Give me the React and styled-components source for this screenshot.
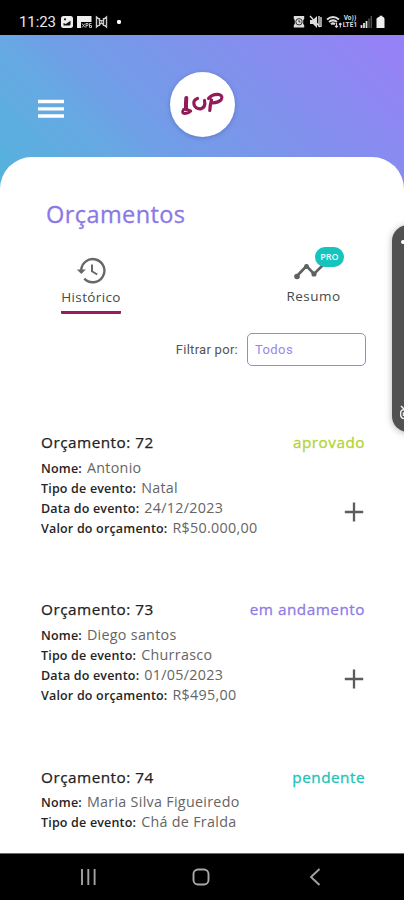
import React from 'react';
import styled, { createGlobalStyle } from 'styled-components';

const Global = createGlobalStyle`
  * { box-sizing: border-box; }
  body { margin: 0; background: #000; }
`;

const Screen = styled.div`
  position: relative;
  width: 404px;
  height: 900px;
  overflow: hidden;
  display: flex;
  flex-direction: column;
  background: #000;
  font-family: 'Open Sans', sans-serif;
`;

const StatusBar = styled.div`
  height: 35px;
  flex: none;
  display: flex;
  align-items: center;
  justify-content: space-between;
  padding: 8px 18px 0 19px;
  color: #e8e8e8;
`;

const Clock = styled.span`
  font: 400 15px/18px Roboto, sans-serif;
  width: 37px;
  margin-right: 4px;
  letter-spacing: -0.1px;
  white-space: nowrap;
`;

const StatusGroup = styled.div`
  display: flex;
  align-items: center;
  svg { display: block; flex: none; }
`;

const Body = styled.div`
  flex: none;
  height: 818px;
  display: flex;
  flex-direction: column;
  background: linear-gradient(45deg, #50b5da 0, #68a8e4 124px, #709ee7 160px, #8091ec 262px, #9880f8 409px);
  background-size: 404px 175px;
  background-repeat: no-repeat;
`;

const Header = styled.header`
  height: 122px;
  flex: none;
  display: grid;
  grid-template-columns: 1fr 66px 1fr;
  align-items: center;
  padding: 17px 0 0 38px;
`;

const MenuButton = styled.button`
  border: 0;
  background: none;
  padding: 8px 0 0;
  width: 26px;
  svg { display: block; }
`;

const Logo = styled.div`
  width: 65px;
  height: 65px;
  border-radius: 50%;
  background: #fff;
  box-shadow: 0 1px 4px rgba(40, 60, 130, 0.35);
  margin-left: -18px;
  margin-top: -1px;
`;

const Panel = styled.main`
  flex: 1;
  min-height: 0;
  overflow: hidden;
  background: #fff;
  border-radius: 32px 32px 0 0;
  padding: 41px 38px 0 40px;
`;

const Heading = styled.h1`
  margin: 0 0 0 6px;
  font-size: 23.5px;
  line-height: 32px;
  font-weight: 400;
  letter-spacing: 0.42px;
  -webkit-text-stroke: 0.3px;
  color: #8b78e6;
`;

const Tabs = styled.nav`
  height: 89px;
  padding: 26px 25px 0 21px;
  display: flex;
  justify-content: space-between;
`;

const Tab = styled.div`
  position: relative;
  display: flex;
  flex-direction: column;
  align-items: center;
  height: 58px;
  width: ${p => p.$width}px;
  border-bottom: 3px solid ${p => (p.$active ? '#9b1b62' : 'transparent')};
  border-radius: 1px;
  svg { display: block; height: 29px; }
`;

const TabLabel = styled.span`
  font-size: 13.5px;
  line-height: 20px;
  margin-top: ${p => p.$top}px;
  color: #484848;
  letter-spacing: ${p => p.$track}px;
  white-space: nowrap;
`;

const ProBadge = styled.span`
  position: absolute;
  left: 29px;
  top: -9px;
  width: 29px;
  height: 20px;
  border-radius: 10px;
  background: #14c4bd;
  color: #e8fffd;
  font-size: 9px;
  line-height: 20px;
  font-weight: 600;
  text-align: center;
`;

const Filter = styled.div`
  display: flex;
  align-items: center;
  justify-content: flex-end;
  gap: 9px;
  height: 33px;
  margin-top: 14px;
`;

const FilterLabel = styled.label`
  font: 400 13px/16px Roboto, sans-serif;
  letter-spacing: 0.28px;
  color: #555;
  white-space: nowrap;
`;

const Select = styled.div`
  width: 119px;
  height: 33px;
  border: 1px solid #9684f0;
  border-radius: 5px;
  padding-left: 7px;
  font: 400 13px/32px Roboto, sans-serif;
  letter-spacing: 0.4px;
  color: #9888e8;
`;

const List = styled.section`
  padding-top: 64px;
`;

const Budget = styled.article`
  height: 167.4px;
`;

const BudgetHead = styled.div`
  display: flex;
  justify-content: space-between;
  align-items: center;
  height: 24px;
  padding: 0 1px 0 1px;
  margin-bottom: 3.5px;
`;

const BudgetTitle = styled.h2`
  margin: 0;
  font-size: 15.3px;
  line-height: 24px;
  font-weight: 400;
  letter-spacing: 0.5px;
  -webkit-text-stroke: 0.25px;
  color: #222;
`;

const Status = styled.span`
  font-size: 15.3px;
  line-height: 24px;
  font-weight: 400;
  letter-spacing: 0.5px;
  -webkit-text-stroke: 0.3px;
  color: ${p => p.$color};
`;

const BudgetBody = styled.div`
  display: flex;
  justify-content: space-between;
  align-items: flex-start;
  svg { display: block; margin: 44.500px 2px 0 0; }
`;

const Fields = styled.dl`
  margin: 0;
`;

const Field = styled.div`
  display: flex;
  align-items: baseline;
  height: 20px;
  gap: 5px;
  padding-left: 1px;
  line-height: 20px;
  white-space: nowrap;
`;

const Term = styled.dt`
  font-size: 12.5px;
  font-weight: 600;
  letter-spacing: 0.18px;
  color: #252525;
`;

const Value = styled.dd`
  margin: 0;
  font-size: 14.3px;
  letter-spacing: 0.3px;
  color: #656565;
`;

const EdgePanel = styled.aside`
  position: absolute;
  left: 392px;
  top: 225px;
  width: 40px;
  height: 207px;
  border-radius: 16px;
  background: #515151;
  box-shadow: 0 1px 7px rgba(0, 0, 0, 0.3);
  padding: 15px 0 0 8px;
  svg { display: block; }
`;

const NavBar = styled.footer`
  flex: 1;
  display: flex;
  align-items: center;
  justify-content: space-between;
  padding: 0 83px 0 79px;
  border-top: 1px solid #6b6b6b;
  svg { display: block; }
`;

const NetworkLabel = styled.div`
  width: 16px;
  display: flex;
  flex-direction: column;
  font: 700 6.5px/6.5px Roboto, sans-serif;
  letter-spacing: 0.1px;
  color: #ddd;
  white-space: nowrap;
  text-align: center;
`;

const NetworkLine = styled.span`
  display: block;
  height: 7px;
  line-height: 7px;
  overflow: hidden;
`;

const budgets = [
  {
    id: 72, status: 'aprovado', color: '#b3d433',
    fields: [['Nome:', 'Antonio'], ['Tipo de evento:', 'Natal'], ['Data do evento:', '24/12/2023'], ['Valor do orçamento:', 'R$50.000,00']],
  },
  {
    id: 73, status: 'em andamento', color: '#8d7ce8',
    fields: [['Nome:', 'Diego santos'], ['Tipo de evento:', 'Churrasco'], ['Data do evento:', '01/05/2023'], ['Valor do orçamento:', 'R$495,00']],
  },
  {
    id: 74, status: 'pendente', color: '#22c4b8',
    fields: [['Nome:', 'Maria Silva Figueiredo'], ['Tipo de evento:', 'Chá de Fralda']],
  },
];

const Plus = () => (
  <svg width="20" height="20" viewBox="0 0 20 20" stroke="#5c5c5c" strokeWidth="2.3">
    <path d="M10 .5v19M.8 10h18.4" />
  </svg>
);

const LeftStatusIcons = () => (
  <svg width="64" height="14" viewBox="0 0 64 14">
    <rect x="1" y="1" width="12" height="12" rx="2.5" fill="#eee" />
    <path d="M3.5 8l2.3 1 4.7-3.2v3.4q0 1.3-1.3 1.3H3.5z" fill="#111" />
    <circle cx="5" cy="4.3" r="1.1" fill="#111" />
    <path d="M17 1h14.5v6H21v6h-4z" fill="#eee" />
    <path d="M22 8.5l3 4m0-4-3 4M26 12.5v-4h2v2h-2M31.5 8.5h-2v4h2v-2h-2" stroke="#bbb" strokeWidth="1" fill="none" />
    <path d="M36.5 12V2l5 4 5-4v10l-5-4zM39.5 3v8M43.5 3v8" fill="none" stroke="#ccc" strokeWidth="1.4" />
    <rect x="57" y="5" width="4" height="4" rx="1.4" fill="#fff" />
  </svg>
);

const AlertIcons = () => (
  <svg width="49" height="14" viewBox="0 0 49 14" fill="none" stroke="#ddd">
    <path d="M.8 1h10.4v3l-1 1v4l1 1v2.5H.8V10l1-1V5l-1-1z" fill="#ddd" stroke="none" />
    <circle cx="6" cy="6.8" r="3.2" stroke="#333" />
    <path d="M6 5v2h1.5" stroke="#333" />
    <path d="M17 5h3l4-4v12l-4-4h-3z" fill="#ddd" stroke="none" />
    <path d="M17 1l10 11M26 1v11M28 2v10" strokeWidth="1.4" />
    <path d="M34 4.5q6-5 12 0M36 7q4-3.3 8 0M38 9.2q2-1.7 4 0" strokeWidth="2" />
    <path d="M43.5 8v4m-1.5-1.2 1.5 1.5 1.5-1.5M47.3 12.5v-4m-1.3 1 1.3-1.3 1.3 1.3" strokeWidth="1.1" />
  </svg>
);

const SignalIcons = () => (
  <svg width="28" height="14" viewBox="66 0 28 14" fill="none" stroke="#ddd">
    <path d="M69.5 13v-3M72 13V8M74.5 13V6" strokeWidth="1.8" />
    <path d="M77 13V3.5M79.3 13V1" stroke="#4b4b4b" strokeWidth="1.6" />
    <path d="M86.5 2h1V.7h3V2h1l1 1.500V13h-8V3.500z" fill="#eee" stroke="none" />
  </svg>
);

export default function App() {
  return (
    <Screen>
      <Global />
      <StatusBar>
        <StatusGroup>
          <Clock>11:23</Clock>
          <LeftStatusIcons />
        </StatusGroup>
        <StatusGroup>
          <AlertIcons />
          <NetworkLabel>
            <NetworkLine>Vo))</NetworkLine>
            <NetworkLine>LTE1</NetworkLine>
          </NetworkLabel>
          <SignalIcons />
        </StatusGroup>
      </StatusBar>
      <Body>
        <Header>
          <MenuButton aria-label="Menu">
            <svg width="26" height="20" viewBox="0 0 26 20" stroke="#fff" strokeWidth="3.3">
              <path d="M0 2.5h26M0 9.8h26M0 17h26" />
            </svg>
          </MenuButton>
          <Logo>
            <svg width="65" height="65" viewBox="0 0 65 65" fill="none" stroke="#921c57" strokeWidth="3.2" strokeLinecap="round" strokeLinejoin="round">
              <path d="M16.3 26Q15.8 32 16 37" strokeWidth="4" />
              <path d="M13.5 37.5Q11 41.5 15 41.5Q19 41 20.8 39Q17.5 37 13.5 37.5" strokeWidth="2.8" />
              <path d="M27.5 26.5Q23 28 24 32.500Q25.500 37.200 31 36.800Q36 35 34.500 28.500" />
              <path d="M38.500 26.500Q42 22 49 22.500Q53.500 24 51 28Q47 31.300 41.500 30.800M41.500 28Q40 33 39.800 38.500" />
            </svg>
          </Logo>
        </Header>
        <Panel>
          <Heading>Orçamentos</Heading>
          <Tabs>
            <Tab $active $width={60}>
              <svg width="32" height="29" viewBox="0 0 32 29" fill="none" stroke="#686868" strokeWidth="2.4">
                <path d="M6.2 15A11.6 11.6 0 1 1 9.3 22.6" />
                <path d="M1.8 13.6h9L6.3 18z" fill="#686868" stroke="none" />
                <path d="M17 8.5v6.8l5.2 3.2" strokeWidth="2" />
              </svg>
              <TabLabel $track={0.35} $top={2}>Histórico</TabLabel>
            </Tab>
            <Tab $width={55}>
              <svg width="40" height="29" viewBox="0 0 40 29" fill="none" stroke="#606060" strokeWidth="2.6">
                <path d="M2.5 20.5L12.5 10l7.5 8L31 7" />
                <g fill="#606060" stroke="none">
                  <circle cx="3" cy="20.5" r="2.8" />
                  <circle cx="12.5" cy="10.5" r="2.4" />
                  <circle cx="20" cy="18" r="2.6" />
                </g>
              </svg>
              <ProBadge>PRO</ProBadge>
              <TabLabel $track={0.45} $top={1}>Resumo</TabLabel>
            </Tab>
          </Tabs>
          <Filter>
            <FilterLabel>Filtrar por:</FilterLabel>
            <Select>Todos</Select>
          </Filter>
          <List>
            {budgets.map(b => (
              <Budget key={b.id}>
                <BudgetHead>
                  <BudgetTitle>Orçamento: {b.id}</BudgetTitle>
                  <Status $color={b.color}>{b.status}</Status>
                </BudgetHead>
                <BudgetBody>
                  <Fields>
                    {b.fields.map(([term, value]) => (
                      <Field key={term}>
                        <Term>{term}</Term>
                        <Value>{value}</Value>
                      </Field>
                    ))}
                  </Fields>
                  {b.fields.length > 2 && <Plus />}
                </BudgetBody>
              </Budget>
            ))}
          </List>
        </Panel>
      </Body>
      <NavBar>
        <svg width="18" height="18" viewBox="0 0 18 18" stroke="#a2a2a2" strokeWidth="1.9">
          <path d="M3 1v16M9.3 1v16M15.6 1v16" />
        </svg>
        <svg width="22" height="18" viewBox="0 0 22 18" fill="none" stroke="#aaa" strokeWidth="1.9">
          <rect x="1.5" y="1.5" width="15" height="15" rx="4.5" />
        </svg>
        <svg width="12" height="18" viewBox="0 0 12 18" fill="none" stroke="#a2a2a2" strokeWidth="1.9">
          <path d="M10.5 1L2 9l8.5 8" />
        </svg>
      </NavBar>
      <EdgePanel>
        <svg width="20" height="184" viewBox="0 0 20 184" fill="none" stroke="#eee">
          <circle cx="3" cy="2" r="2" fill="#fff" stroke="none" />
          <path d="M1 166l3 3M5 170q-4.5-1-4.5 4t5 4.5M3.5 176v-3h3" strokeWidth="1.5" />
        </svg>
      </EdgePanel>
    </Screen>
  );
}
